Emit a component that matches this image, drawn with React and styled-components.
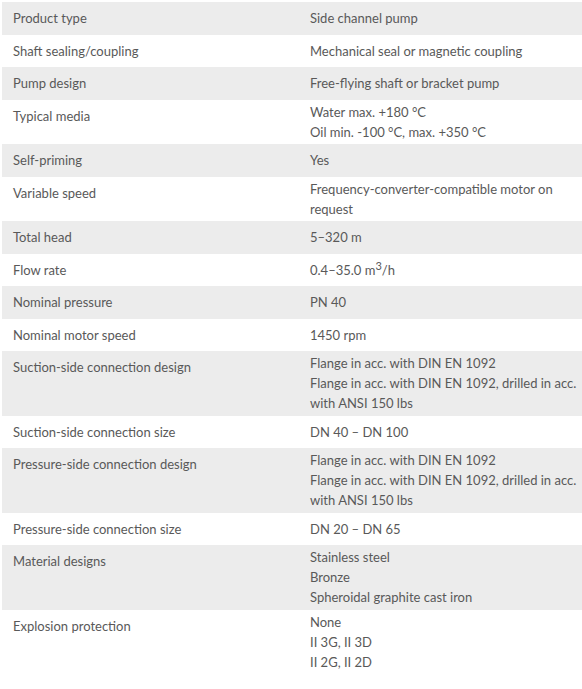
import React from 'react';
import styled, { createGlobalStyle } from 'styled-components';

const GlobalStyle = createGlobalStyle`
    html, body {
        margin: 0;
        padding: 0;
        background: #fff;
    }
`

const specs = [
    { label: "Product type", values: ["Side channel pump"] },
    { label: "Shaft sealing/coupling", values: ["Mechanical seal or magnetic coupling"] },
    { label: "Pump design", values: ["Free-flying shaft or bracket pump"] },
    { label: "Typical media", values: ["Water max. +180 °C", "Oil min. -100 °C, max. +350 °C"] },
    { label: "Self-priming", values: ["Yes"] },
    { label: "Variable speed", values: ["Frequency-converter-compatible motor on request"] },
    { label: "Total head", values: ["5–320 m"] },
    { label: "Flow rate", values: [<>0.4–35.0 m<sup>3</sup>/h</>] },
    { label: "Nominal pressure", values: ["PN 40"] },
    { label: "Nominal motor speed", values: ["1450 rpm"] },
    { label: "Suction-side connection design", values: ["Flange in acc. with DIN EN 1092", "Flange in acc. with DIN EN 1092, drilled in acc. with ANSI 150 lbs"] },
    { label: "Suction-side connection size", values: ["DN 40 – DN 100"] },
    { label: "Pressure-side connection design", values: ["Flange in acc. with DIN EN 1092", "Flange in acc. with DIN EN 1092, drilled in acc. with ANSI 150 lbs"] },
    { label: "Pressure-side connection size", values: ["DN 20 – DN 65"] },
    { label: "Material designs", values: ["Stainless steel", "Bronze", "Spheroidal graphite cast iron"] },
    { label: "Explosion protection", values: ["None", "II 3G, II 3D", "II 2G, II 2D"] },
];

const App = () => {
    return (
        <>
            <GlobalStyle />
            <Table>
                {specs.map((row, i) => (
                    <Row key={row.label} $shaded={i % 2 === 0}>
                        <Label>{row.label}</Label>
                        <Value>
                            {row.values.map((v, j) => (
                                <Line key={j}>{v}</Line>
                            ))}
                        </Value>
                    </Row>
                ))}
            </Table>
        </>
    );
};

export default App;

const Table = styled.div`
    margin: 2px 0 0 2px;
    width: 580px;
    font-family: Lato, "Open Sans", sans-serif;
    font-size: 13px;
    color: #595959;
`

const Row = styled.div`
    display: grid;
    grid-template-columns: 297px 1fr;
    min-height: 32.5px;
    background: ${(p) => (p.$shaded ? '#ececec' : '#fff')};
`

const Label = styled.div`
    padding: 6px 11px 0;
    line-height: 20px;
`

const Value = styled.div`
    align-self: center;
    padding: 2.25px 0 2.25px 11px;
    line-height: 20px;

    sup {
        font-size: 11px;
        line-height: 0;
        vertical-align: 5px;
    }
`

const Line = styled.div`
    line-height: 20px;
`
